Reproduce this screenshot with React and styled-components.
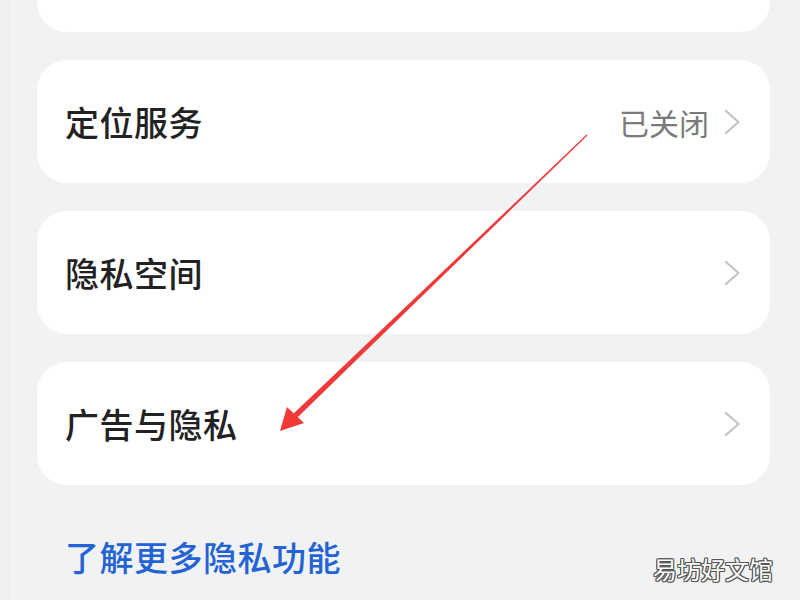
import React from "react";
import styled, { createGlobalStyle } from "styled-components";

const Global = createGlobalStyle`
  html, body { margin: 0; padding: 0; background: #f1f2f4; }
  body { font-family: "Noto Sans CJK SC", "Noto Sans", sans-serif; }
`;

const Page = styled.div`
  position: relative;
  width: 800px;
  height: 600px;
  overflow: hidden;
  background: #f1f2f4;
  display: flex;
`;

const EdgeStrip = styled.div`
  width: 10px;
  flex: none;
  background: #eeeff0;
`;

const Content = styled.div`
  flex: 1;
  display: flex;
  flex-direction: column;
  gap: 28px;
  padding: 0 30px 0 27px;
`;

const Card = styled.div`
  background: #ffffff;
  border-radius: ${(p) => (p.$clipped ? "0 0 30px 30px" : "30px")};
  height: ${(p) => (p.$clipped ? "32px" : "123px")};
  display: flex;
  align-items: center;
  padding: 0 29px 0 28px;
`;

const Title = styled.span`
  flex: 1;
  font-size: 34px;
  font-weight: 500;
  color: #222222;
  letter-spacing: 0.5px;
`;

const Value = styled.span`
  font-size: 30px;
  color: #7a7a7a;
  margin-right: 15px;
`;

const Chevron = styled.svg`
  width: 17px;
  height: 26px;
  flex: none;
`;

const LinkText = styled.div`
  margin-top: 24px;
  padding-left: 28px;
  font-size: 34px;
  line-height: 40px;
  font-weight: 500;
  color: #2463d4;
  letter-spacing: 0.5px;
`;

const Watermark = styled.div`
  position: absolute;
  right: 27px;
  bottom: 17px;
  font-size: 24px;
  line-height: 28px;
  color: #ffffff;
  font-family: "Noto Sans CJK SC", sans-serif;
  text-shadow:
    1px 0 0 #555, -1px 0 0 #555, 0 1px 0 #555, 0 -1px 0 #555,
    1px 1px 0 #555, -1px -1px 0 #555, 1px -1px 0 #555, -1px 1px 0 #555;
`;

const ArrowLayer = styled.svg`
  position: absolute;
  left: 0;
  top: 0;
  width: 800px;
  height: 600px;
  pointer-events: none;
`;

const ChevronIcon = () => (
  <Chevron viewBox="0 0 17 26">
    <path d="M2 2 L14.5 13 L2 24" fill="none" stroke="#c2c2c2" strokeWidth="2.2" strokeLinecap="round" strokeLinejoin="round" />
  </Chevron>
);

const rows = [
  { title: "定位服务", value: "已关闭" },
  { title: "隐私空间" },
  { title: "广告与隐私" },
];

export default function App() {
  return (
    <>
      <Global />
      <Page>
        <EdgeStrip />
        <Content>
          <Card $clipped />
          {rows.map((r) => (
            <Card key={r.title}>
              <Title>{r.title}</Title>
              {r.value && <Value>{r.value}</Value>}
              <ChevronIcon />
            </Card>
          ))}
          <LinkText>了解更多隐私功能</LinkText>
        </Content>
        <ArrowLayer viewBox="0 0 800 600">
          <polygon points="587.4,135.4 586.6,134.6 293.6,413.6 297.4,417.4" fill="#f03a3a" />
          <polygon points="280,431 287,407 304,423" fill="#f03a3a" />
        </ArrowLayer>
        <Watermark>易坊好文馆</Watermark>
      </Page>
    </>
  );
}
